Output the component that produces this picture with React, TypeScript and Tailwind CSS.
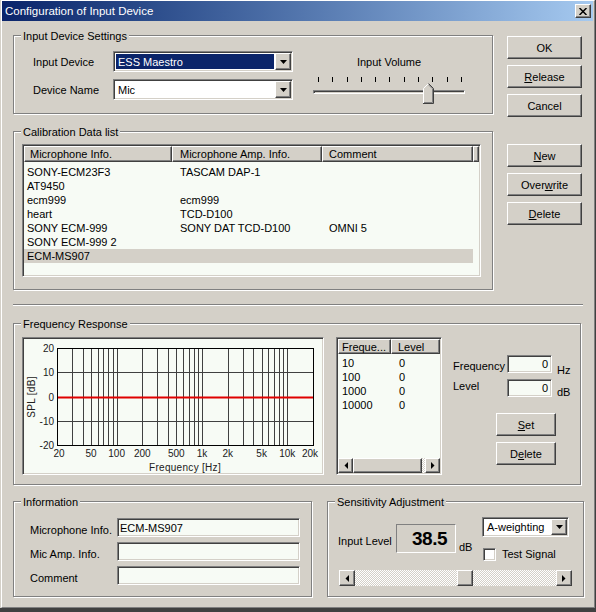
import React from 'react';

const RAISED =
  'border border-t-white border-l-white border-r-[#404040] border-b-[#404040] shadow-[inset_-1px_-1px_0_#808080]';
const SUNKEN =
  'border border-t-[#808080] border-l-[#808080] border-r-white border-b-white shadow-[inset_1px_1px_0_#404040,inset_-1px_-1px_0_#d4d0c8]';
const DITHER =
  'bg-[image:repeating-conic-gradient(#ffffff_0_25%,#d4d0c8_0_50%)] bg-[length:2px_2px]';
const FIELD = 'bg-[#f7fbf5]';

function Btn({ children, className = '' }: { children: React.ReactNode; className?: string }) {
  return (
    <div className={`${RAISED} bg-[#d4d0c8] flex items-center justify-center ${className}`}>{children}</div>
  );
}

function Group({
  title,
  className = '',
  children,
}: {
  title: string;
  className?: string;
  children?: React.ReactNode;
}) {
  return (
    <div className={`relative border border-[#808080] shadow-[inset_1px_1px_0_#fff,1px_1px_0_#fff] ${className}`}>
      <span className="absolute left-[7px] top-[-7px] bg-[#d4d0c8] px-[2px] leading-[14px] whitespace-nowrap">
        {title}
      </span>
      {children}
    </div>
  );
}

function DownArrow() {
  return (
    <svg width="7" height="4" viewBox="0 0 7 4">
      <polygon points="0,0 7,0 3.5,4" fill="#000" />
    </svg>
  );
}

function Combo({
  value,
  selected = false,
  className = '',
}: {
  value: string;
  selected?: boolean;
  className?: string;
}) {
  return (
    <div className={`${SUNKEN} bg-white p-[1px] flex ${className}`}>
      <div className="flex-1 p-[1px] flex">
        <div
          className={`flex-1 flex items-center pl-[2px] whitespace-nowrap ${
            selected ? 'bg-[#0a246a] text-white' : ''
          }`}
        >
          {value}
        </div>
      </div>
      <div className={`${RAISED} bg-[#d4d0c8] w-[16px] flex items-center justify-center`}>
        <DownArrow />
      </div>
    </div>
  );
}

function Arrow({ dir, className = '' }: { dir: 'l' | 'r'; className?: string }) {
  return (
    <div className={`${RAISED} bg-[#d4d0c8] flex items-center justify-center shrink-0 ${className}`}>
      <svg width="4" height="7" viewBox="0 0 4 7">
        <polygon points={dir === 'l' ? '4,0 4,7 0.5,3.5' : '0,0 0,7 3.5,3.5'} fill="#000" />
      </svg>
    </div>
  );
}

function SliderThumb() {
  return (
    <svg width="11" height="21" viewBox="0 0 11 21">
      <polygon points="0.5,5.5 5.5,0.5 10.5,5.5 10.5,20.5 0.5,20.5" fill="#d4d0c8" />
      <polyline points="0.5,20 0.5,5.5 5.5,0.5" fill="none" stroke="#ffffff" />
      <polyline points="5.5,0.5 10.5,5.5 10.5,20.5 0,20.5" fill="none" stroke="#404040" />
      <polyline points="5.5,1.8 9.5,5.8 9.5,19.5 1,19.5" fill="none" stroke="#808080" />
    </svg>
  );
}

function Chart() {
  const freqs = [
    30, 40, 50, 60, 70, 80, 90, 100, 200, 300, 400, 500, 600, 700, 800, 900, 1000, 2000, 3000, 4000, 5000,
    6000, 7000, 8000, 9000, 10000,
  ];
  const fx = (f: number) => 33 + (256 * Math.log10(f / 20)) / 3;
  const ys = [9, 33, 58, 82, 106];
  const yl = ['20', '10', '0', '-10', '-20'];
  const xl: [number, string][] = [
    [20, '20'],
    [50, '50'],
    [100, '100'],
    [200, '200'],
    [500, '500'],
    [1000, '1k'],
    [2000, '2k'],
    [5000, '5k'],
    [10000, '10k'],
    [20000, '20k'],
  ];
  return (
    <svg
      width="298"
      height="134"
      viewBox="0 0 298 134"
      className="block"
      fontFamily="'Liberation Sans', Arial, sans-serif"
      fontSize="10"
      fill="#202020"
    >
      {ys.map((y) => (
        <line key={y} x1="33" x2="289" y1={y + 0.5} y2={y + 0.5} stroke="#404040" strokeWidth="1" />
      ))}
      {freqs.map((f) => {
        const x = Math.round(fx(f)) + 0.5;
        return <line key={f} x1={x} x2={x} y1="9" y2="106" stroke="#404040" strokeWidth="1" />;
      })}
      <rect x="33.5" y="9.5" width="256" height="97" fill="none" stroke="#000" strokeWidth="1" />
      <line x1="34" x2="289" y1="58.5" y2="58.5" stroke="#e00000" strokeWidth="2" />
      {ys.map((y, i) => (
        <text key={yl[i]} x="30" y={y + 4} textAnchor="end">
          {yl[i]}
        </text>
      ))}
      {xl.map(([f, l], i) => {
        let x = fx(f);
        if (i === 0) x += 2;
        if (i === xl.length - 1) x -= 3;
        return (
          <text key={l} x={x} y="118" textAnchor="middle">
            {l}
          </text>
        );
      })}
      <text x="161" y="132" textAnchor="middle" letterSpacing="0.3">
        Frequency [Hz]
      </text>
      <text transform="translate(10.5,58) rotate(-90)" textAnchor="middle" letterSpacing="0.3">
        SPL [dB]
      </text>
    </svg>
  );
}

const calRows: [string, string, string][] = [
  ['SONY-ECM23F3', 'TASCAM DAP-1', ''],
  ['AT9450', '', ''],
  ['ecm999', 'ecm999', ''],
  ['heart', 'TCD-D100', ''],
  ['SONY ECM-999', 'SONY DAT TCD-D100', 'OMNI 5'],
  ['SONY ECM-999 2', '', ''],
  ['ECM-MS907', '', ''],
];

const freqRows: [string, string][] = [
  ['10', '0'],
  ['100', '0'],
  ['1000', '0'],
  ['10000', '0'],
];

export default function App() {
  return (
    <div className="w-[596px] h-[612px] bg-[#d4d0c8] pl-[1px] border-r border-b-[4px] border-r-[#404040] border-b-[#404040] font-['Liberation_Sans',Arial,sans-serif] text-[11px] leading-[14px] text-black overflow-hidden">
      <div className="h-full border border-t-white border-l-white border-r-[#808080] border-b-[#808080] flex flex-col">
        {/* Title bar */}
        <div className="h-[20px] mr-[1px] bg-gradient-to-r from-[#0a246a] to-[#a6caf0] flex items-center justify-between pl-[3px] pr-[2px]">
          <span className="text-white text-[11.5px]">Configuration of Input Device</span>
          <div className={`${RAISED} bg-[#d4d0c8] w-[16px] h-[14px] flex items-center justify-center`}>
            <svg width="8" height="7" viewBox="0 0 8 7">
              <path d="M0.5 0 L7.5 7 M7.5 0 L0.5 7" stroke="#000" strokeWidth="1.5" />
            </svg>
          </div>
        </div>

        <div className="ml-[11px] flex flex-col">
          {/* Row A */}
          <div className="mt-[14px] flex items-start gap-[14px]">
            <Group title="Input Device Settings" className="w-[480px] h-[79px] flex">
              <div className="pl-[19px] pt-[15px] flex flex-col gap-[7px]">
                <div className="flex items-center">
                  <span className="w-[80px]">Input Device</span>
                  <Combo value="ESS Maestro" selected className="w-[180px] h-[21px]" />
                </div>
                <div className="flex items-center">
                  <span className="w-[80px]">Device Name</span>
                  <Combo value="Mic" className="w-[180px] h-[21px]" />
                </div>
              </div>
              <div className="ml-[20px] w-[152px] pt-[19px] flex flex-col">
                <div className="text-center">Input Volume</div>
                <div className="mt-[8px] h-[5px] pl-[5px] pr-[3px] flex justify-between">
                  {Array.from({ length: 11 }).map((_, i) => (
                    <div key={i} className="w-[1px] h-[5px] bg-black" />
                  ))}
                </div>
                <div className="relative mt-[1px] h-[21px] pt-[7px]">
                  <div className={`${SUNKEN} h-[4px]`} />
                  <div className="absolute left-[110px] top-0">
                    <SliderThumb />
                  </div>
                </div>
              </div>
            </Group>
            <div className="mt-[1px] flex flex-col gap-[6px] w-[75px]">
              <Btn className="h-[23px]">OK</Btn>
              <Btn className="h-[23px]">
                <span>
                  <span className="underline">R</span>elease
                </span>
              </Btn>
              <Btn className="h-[23px]">Cancel</Btn>
            </div>
          </div>

          {/* Row B */}
          <div className="mt-[14px] flex items-start gap-[14px]">
            <Group title="Calibration Data list" className="w-[480px] h-[159px]">
              <div className={`${SUNKEN} ${FIELD} ml-[8px] mt-[12px] w-[459px] h-[133px] p-[1px] flex flex-col`}>
                <div className="flex h-[16px] shrink-0">
                  <div className={`${RAISED} bg-[#d4d0c8] w-[148px] pl-[5px] flex items-center`}>Microphone Info.</div>
                  <div className={`${RAISED} bg-[#d4d0c8] w-[150px] pl-[7px] flex items-center`}>
                    Microphone Amp. Info.
                  </div>
                  <div className={`${RAISED} bg-[#d4d0c8] w-[151px] pl-[6px] flex items-center`}>Comment</div>
                  <div className={`${RAISED} bg-[#d4d0c8] flex-1`} />
                </div>
                <div className="pt-[3px] flex flex-col">
                  {calRows.map((r, i) => (
                    <div
                      key={i}
                      className={`flex h-[14px] w-[449px] items-center whitespace-nowrap ${
                        i === calRows.length - 1 ? 'bg-[#d4d0c8]' : ''
                      }`}
                    >
                      <span className="w-[148px] pl-[3px]">{r[0]}</span>
                      <span className="w-[150px] pl-[8px]">{r[1]}</span>
                      <span className="w-[151px] pl-[7px]">{r[2]}</span>
                    </div>
                  ))}
                </div>
              </div>
            </Group>
            <div className="mt-[13px] flex flex-col gap-[6px] w-[75px]">
              <Btn className="h-[23px]">
                <span>
                  <span className="underline">N</span>ew
                </span>
              </Btn>
              <Btn className="h-[23px]">
                <span>
                  Over<span className="underline">w</span>rite
                </span>
              </Btn>
              <Btn className="h-[23px]">
                <span>
                  <span className="underline">D</span>elete
                </span>
              </Btn>
            </div>
          </div>

          {/* Separator */}
          <div className="mt-[14px] w-[570px] h-[2px] border-t border-t-[#808080] border-b border-b-white" />

          {/* Frequency response */}
          <Group title="Frequency Response" className="mt-[17px] w-[568px] h-[162px]">
            <div className="pl-[8px] pt-[13px] flex items-start">
              <div className={`${SUNKEN} ${FIELD} w-[302px] h-[138px] p-[1px]`}>
                <Chart />
              </div>
              <div className={`${SUNKEN} ${FIELD} ml-[12px] w-[106px] h-[138px] p-[1px] flex flex-col`}>
                <div className="flex h-[15px] shrink-0">
                  <div className={`${RAISED} bg-[#d4d0c8] w-[53px] pl-[3px] flex items-center`}>Freque...</div>
                  <div className={`${RAISED} bg-[#d4d0c8] flex-1 pl-[6px] flex items-center`}>Level</div>
                </div>
                <div className="flex-1 pt-[2px] flex flex-col">
                  {freqRows.map((r) => (
                    <div key={r[0]} className="flex h-[14px] items-center">
                      <span className="w-[53px] pl-[4px]">{r[0]}</span>
                      <span className="pl-[8px]">{r[1]}</span>
                    </div>
                  ))}
                </div>
                <div className="flex h-[15px] shrink-0">
                  <Arrow dir="l" className="w-[15px]" />
                  <div className={`${RAISED} bg-[#d4d0c8] w-[69px]`} />
                  <div className={`${DITHER} flex-1`} />
                  <Arrow dir="r" className="w-[15px]" />
                </div>
              </div>
              <div className="ml-[11px] pt-[18px] flex flex-col">
                <div className="flex items-start h-[18px]">
                  <span className="w-[54px] mt-[4px]">Frequency</span>
                  <div className={`${SUNKEN} ${FIELD} w-[45px] h-[18px] pr-[3px] flex items-center justify-end`}>0</div>
                  <span className="ml-[5px] mt-[8px]">Hz</span>
                </div>
                <div className="mt-[6px] flex items-start h-[18px]">
                  <span className="w-[54px]">Level</span>
                  <div className={`${SUNKEN} ${FIELD} w-[45px] h-[18px] pr-[3px] flex items-center justify-end`}>0</div>
                  <span className="ml-[5px] mt-[6px]">dB</span>
                </div>
                <Btn className="ml-[43px] mt-[16px] w-[60px] h-[23px]">
                  <span>
                    <span className="underline">S</span>et
                  </span>
                </Btn>
                <Btn className="ml-[43px] mt-[6px] w-[60px] h-[23px]">
                  <span>
                    D<span className="underline">e</span>lete
                  </span>
                </Btn>
              </div>
            </div>
          </Group>

          {/* Bottom row */}
          <div className="mt-[16px] flex items-start gap-[15px]">
            <Group title="Information" className="w-[299px] h-[96px]">
              <div className="pl-[16px] pt-[16px] flex flex-col gap-[5px]">
                {[
                  ['Microphone Info.', 'ECM-MS907'],
                  ['Mic Amp. Info.', ''],
                  ['Comment', ''],
                ].map(([l, v]) => (
                  <div key={l} className="flex items-start h-[19px]">
                    <span className="w-[87px] mt-[5px] whitespace-nowrap">{l}</span>
                    <div className={`${SUNKEN} ${FIELD} w-[183px] h-[19px] pl-[2px] flex items-center`}>{v}</div>
                  </div>
                ))}
              </div>
            </Group>
            <Group title="Sensitivity Adjustment" className="w-[257px] h-[96px]">
              <div className="pl-[10px] pt-[15px] flex flex-col">
                <div className="flex items-start">
                  <div className="w-[144px] flex items-start">
                    <span className="w-[58px] mt-[17px] whitespace-nowrap">Input Level</span>
                    <div className="mt-[7px] w-[60px] h-[29px] border border-t-[#808080] border-l-[#808080] border-r-white border-b-white pr-[8px] flex items-center justify-end text-[19px] font-bold tracking-[-0.5px] leading-none">
                      38.5
                    </div>
                    <span className="ml-[3px] mt-[23px]">dB</span>
                  </div>
                  <div className="flex flex-col">
                    <Combo value="A-weighting" className="w-[87px] h-[20px]" />
                    <div className="mt-[10px] flex items-center">
                      <div className={`${SUNKEN} bg-white ml-[1px] w-[13px] h-[13px]`} />
                      <span className="ml-[6px]">Test Signal</span>
                    </div>
                  </div>
                </div>
                <div className="mt-[9px] ml-[1px] w-[233px] h-[16px] flex">
                  <Arrow dir="l" className="w-[16px]" />
                  <div className={`${DITHER} w-[102px]`} />
                  <div className={`${RAISED} bg-[#d4d0c8] w-[16px]`} />
                  <div className={`${DITHER} flex-1`} />
                  <Arrow dir="r" className="w-[16px]" />
                </div>
              </div>
            </Group>
          </div>
        </div>
      </div>
    </div>
  );
}
